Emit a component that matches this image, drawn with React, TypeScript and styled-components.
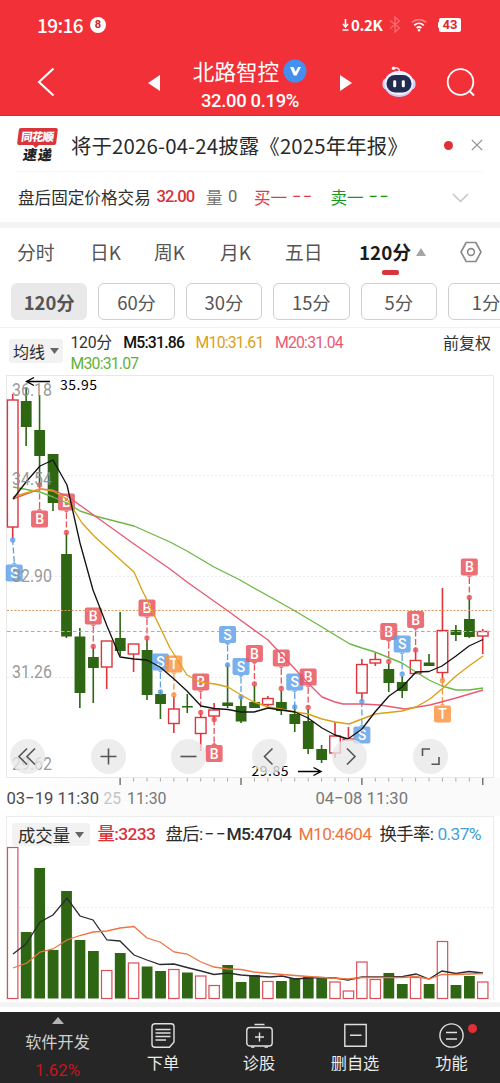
import React from "react";
import styled, { createGlobalStyle, css } from "styled-components";

const GlobalStyle = createGlobalStyle`
  * { box-sizing: border-box; }
  html, body { margin: 0; padding: 0; background: #fff; }
  body {
    font-family: "Noto Sans CJK SC", "Noto Sans", sans-serif;
    color: #222;
    line-height: 1;
    -webkit-font-smoothing: antialiased;
  }
  svg { display: block; flex: none; }
`;

const num = css`
  font-family: Roboto, "Noto Sans CJK SC", sans-serif;
`;

const Screen = styled.div`
  width: 500px;
  height: 1083px;
  overflow: hidden;
  display: flex;
  flex-direction: column;
  background: #fff;
`;

/* ---------- header ---------- */
const Header = styled.header`
  height: 116px;
  flex: none;
  background: #f13038;
  border-bottom: 1px solid #e02a32;
  color: #fff;
  display: flex;
  flex-direction: column;
`;
const StatusBar = styled.div`
  height: 50px;
  padding: 0 39px 0 37px;
  display: flex;
  align-items: center;
`;
const Clock = styled.span`
  font-size: 19px;
  font-weight: 500;
  letter-spacing: -0.6px;
  width: 53px;
  white-space: nowrap;
`;
const CountDot = styled.span`
  ${num}
  width: 16px;
  height: 16px;
  border-radius: 50%;
  background: #fff;
  color: #c8242c;
  font-size: 11px;
  font-weight: 700;
  line-height: 16px;
  text-align: center;
`;
const Speed = styled.span`
  margin: 0 7px 0 2px;
  width: 31px;
  font-size: 15px;
  font-weight: 700;
  letter-spacing: -0.4px;
  white-space: nowrap;
`;
const Battery = styled.span`
  ${num}
  position: relative;
  width: 22px;
  height: 14px;
  margin-left: 12px;
  border-radius: 2px;
  background: #fff;
  color: #d62a32;
  font-size: 13px;
  font-weight: 700;
  line-height: 14.5px;
  text-align: center;
  &::before {
    content: "";
    position: absolute;
    left: -1px;
    top: 4px;
    width: 2px;
    height: 6px;
    border-radius: 1px;
    background: #fff;
  }
`;
const StatusIcon = styled.span<{ $after: number }>`
  margin-right: ${(p) => p.$after}px;
`;
const Spacer = styled.span`
  flex: 1;
`;
const TitleBar = styled.div`
  height: 66px;
  display: grid;
  grid-template-columns: 37px 111px 12px 180px 12px 30px 34px 30px 30px;
  align-items: center;
  padding-top: 1px;
`;
const TitleCell = styled.div<{ $shift?: number }>`
  display: flex;
  margin-top: ${(p) => p.$shift ?? 0}px;
`;
const StockBlock = styled.div`
  display: flex;
  flex-direction: column;
  align-items: center;
  gap: 7px;
  margin-top: 3px;
`;
const StockName = styled.div`
  display: flex;
  align-items: center;
  gap: 4px;
  font-size: 21.6px;
  line-height: 26px;
`;
const StockQuote = styled.div`
  ${num}
  font-size: 18.4px;
  font-weight: 500;
  line-height: 20px;
  letter-spacing: -0.3px;
`;

/* ---------- notice ---------- */
const Notice = styled.div`
  height: 56px;
  margin: 0 17px;
  border-bottom: 1px solid #f7f7f7;
  flex: none;
  display: flex;
  align-items: center;
  padding-top: 3px;
`;
const ExpressLogo = styled.div`
  width: 41px;
  display: flex;
  flex-direction: column;
  align-items: center;
  font-weight: 900;
`;
const LogoTop = styled.span`
  position: relative;
  width: 39px;
  height: 17px;
  border-radius: 2px;
  background: #d9363c;
  transform: skewX(-7deg);
  color: #fff;
  font-size: 11.4px;
  line-height: 16px;
  text-align: center;
  letter-spacing: -0.6px;
  &::after {
    content: "";
    position: absolute;
    left: 16px;
    top: 17px;
    border: 3px solid transparent;
    border-top-color: #d9363c;
  }
`;
const LogoBottom = styled.span`
  color: #222;
  font-size: 14px;
  line-height: 15px;
  letter-spacing: 1px;
  margin-top: 2px;
  transform: skewX(-9deg);
`;
const NoticeText = styled.span`
  margin-left: 13px;
  font-size: 20.4px;
  line-height: 26px;
  letter-spacing: 0.15px;
  color: #2a2a2a;
  white-space: nowrap;
`;
const RedDot = styled.span<{ $size: number }>`
  width: ${(p) => p.$size}px;
  height: ${(p) => p.$size}px;
  border-radius: 50%;
  background: #e03036;
  flex: none;
`;
const CloseIcon = styled.span`
  margin-left: 18px;
`;
const AfterHours = styled.div`
  height: 50px;
  flex: none;
  display: grid;
  grid-template-columns: 138.5px 49.5px 22px 26px 38px 38.5px 38px 83px auto;
  padding: 1px 0 0 18px;
  align-items: center;
  font-size: 16.6px;
  white-space: nowrap;
  color: #2f2f2f;
`;
const Cell = styled.span<{ $color?: string }>`
  color: ${(p) => p.$color ?? "inherit"};
`;
const NumCell = styled.span<{ $color?: string; $spacing?: number; $weight?: number }>`
  ${num}
  color: ${(p) => p.$color ?? "inherit"};
  font-weight: ${(p) => p.$weight ?? 400};
  letter-spacing: ${(p) => p.$spacing ?? -0.6}px;
`;
const Band = styled.div<{ $h: number; $above?: number }>`
  height: ${(p) => p.$h}px;
  margin-top: ${(p) => p.$above ?? 0}px;
  flex: none;
  background: #f4f4f4;
`;

/* ---------- period selection ---------- */
const Tabs = styled.nav`
  height: 48px;
  flex: none;
  display: grid;
  grid-template-columns: 73px 64px 66px 65px 74px 101px auto;
  padding-left: 17px;
  align-items: center;
`;
const Tab = styled.div<{ $active?: boolean }>`
  position: relative;
  display: flex;
  align-items: center;
  gap: 5px;
  font-size: 18.8px;
  line-height: 26px;
  white-space: nowrap;
  color: ${(p) => (p.$active ? "#1c1c1c" : "#555")};
  font-weight: ${(p) => (p.$active ? 700 : 400)};
`;
const Underline = styled.span`
  position: absolute;
  left: 23px;
  top: 31px;
  width: 17px;
  height: 4.5px;
  border-radius: 2px;
  background: #d8353d;
`;
const Chips = styled.div`
  height: 52px;
  flex: none;
  border-bottom: 1px solid #f0f0f0;
  display: flex;
  gap: 11px;
  padding: 7px 0 0 11px;
  overflow: hidden;
`;
const Chip = styled.div<{ $active?: boolean }>`
  width: 76.4px;
  height: 37px;
  flex: none;
  border-radius: 6px;
  border: 1px solid ${(p) => (p.$active ? "#e9e9e9" : "#cfcfcf")};
  background: ${(p) => (p.$active ? "#e9e9e9" : "#fff")};
  color: #555;
  font-size: 18.4px;
  font-weight: ${(p) => (p.$active ? 700 : 400)};
  line-height: 36px;
  text-align: center;
`;

/* ---------- indicator line ---------- */
const Indicators = styled.div`
  height: 47px;
  flex: none;
  display: flex;
  padding: 5px 9px 0 9px;
`;
const Selector = styled.div<{ $w: number; $h: number }>`
  width: ${(p) => p.$w}px;
  height: ${(p) => p.$h}px;
  flex: none;
  border-radius: 3px;
  background: #f2f2f2;
  display: flex;
  align-items: center;
  justify-content: center;
  gap: 5px;
  color: #2c2c2c;
  white-space: nowrap;
`;
const SelectorText = styled.span<{ $size: number }>`
  font-size: ${(p) => p.$size}px;
`;
const AvgSelector = styled(Selector)`
  margin-top: 6px;
`;
const AvgValues = styled.div`
  ${num}
  margin-left: 7.5px;
  width: 300px;
  display: flex;
  flex-wrap: wrap;
  align-content: flex-start;
  column-gap: 11.5px;
  font-size: 15.8px;
  line-height: 20.5px;
  letter-spacing: -0.8px;
`;
const Adjust = styled.span`
  font-size: 16px;
  line-height: 19px;
  color: #333;
`;
const Value = styled.span<{ $color: string; $weight?: number }>`
  color: ${(p) => p.$color};
  font-weight: ${(p) => p.$weight ?? 400};
  white-space: nowrap;
`;
const PeriodValue = styled(Value)`
  letter-spacing: -0.3px;
`;

/* ---------- chart ---------- */
const ChartPanel = styled.section`
  position: relative;
  height: 441px;
  flex: none;
`;
const Controls = styled.div`
  position: absolute;
  left: 10px;
  top: 364px;
  display: flex;
  gap: 45.5px;
`;
const RoundButton = styled.button`
  width: 35px;
  height: 35px;
  padding: 0;
  border: 0;
  border-radius: 50%;
  background: rgba(232, 232, 232, 0.78);
`;
const VolumePanel = styled.section`
  height: 184px;
  flex: none;
  margin: 0 6px;
  border: 1px solid #ececec;
  border-bottom: 0;
  display: flex;
  flex-direction: column;
`;
const VolumeHead = styled.div`
  ${num}
  height: 31px;
  padding: 5px 0 0 5px;
  flex: none;
  display: flex;
  font-size: 17.4px;
  line-height: 25px;
  letter-spacing: -0.65px;
  white-space: nowrap;
`;
const VolumeValue = styled(Value)<{ $w: number }>`
  width: ${(p) => p.$w}px;
`;
const Dashes = styled.span`
  letter-spacing: 1.6px;
  margin-left: 2px;
`;
const VolumeSelector = styled(Selector)`
  font-family: "Noto Sans CJK SC", sans-serif;
  letter-spacing: 0;
  margin: 1px 7.5px 0 0;
`;

/* ---------- bottom navigation ---------- */
const BottomNav = styled.nav`
  margin-top: 5px;
  flex: 1;
  background: #262626;
  display: grid;
  grid-template-columns: 115px 96px 96px 96px 97px;
`;
const NavItem = styled.div<{ $top: number }>`
  display: flex;
  flex-direction: column;
  align-items: center;
  padding-top: ${(p) => p.$top}px;
  font-size: 16.2px;
  color: #ececec;
`;
const NavLabel = styled.span<{ $gap: number; $color?: string }>`
  margin-top: ${(p) => p.$gap}px;
  line-height: 20px;
  color: ${(p) => p.$color ?? "inherit"};
`;
const Change = styled.span`
  ${num}
  margin-top: 9px;
  font-size: 16.8px;
  line-height: 20px;
  color: #c4161c;
`;
const IconWrap = styled.span`
  position: relative;
`;
const Badge = styled(RedDot)`
  position: absolute;
  right: -12.5px;
  top: 0.5px;
`;

/* ---------- data ---------- */
const RED = "#e0333c";
const GREEN = "#2f6614";
const PITCH = 13.43;
const cx = (i: number) => 12.7 + PITCH * i;

// kind, body top, body bottom, wick top, wick bottom
type Candle = ["r" | "g", number, number, number, number];
const candles: Candle[] = [
  ["r", 400, 527, 394, 539], ["g", 401, 427, 388, 446], ["g", 430, 456, 395, 485], ["g", 454, 503, 454, 511],
  ["g", 554, 636.5, 533, 638], ["g", 636.5, 693, 628, 708], ["g", 657, 668, 647, 703], ["r", 641, 667, 641, 689],
  ["g", 638, 651, 612, 656], ["r", 644, 654, 644, 672], ["g", 650, 695, 639, 700], ["g", 694, 704, 692, 719],
  ["r", 709, 723.5, 696, 733], ["g", 706, 707.5, 694, 713], ["r", 717.5, 733.5, 713, 751], ["r", 710, 716, 703, 720],
  ["g", 702.5, 706, 665, 708], ["g", 706, 721.5, 697, 723], ["g", 702, 708, 685, 708], ["r", 698.5, 704.5, 696, 706],
  ["g", 702, 711, 690, 715], ["g", 714, 724, 705, 732], ["g", 721, 749, 709, 754], ["g", 749, 760, 745, 763],
  ["r", 736, 753, 722, 758], ["r", 739, 740, 727, 740], ["r", 664.5, 693, 659, 701], ["r", 659.5, 663, 653, 666],
  ["g", 669, 683, 663, 692], ["g", 682, 691, 676, 698], ["r", 660.5, 673.5, 650, 674], ["g", 662.5, 666, 654, 666],
  ["r", 630.5, 672.5, 588, 680], ["g", 630, 635, 625, 641], ["g", 619, 637, 598, 638], ["r", 631.5, 636, 629, 654],
];

const volumes: ["r" | "g", number][] = [
  ["r", 847], ["g", 932], ["g", 868], ["g", 950], ["g", 891], ["g", 940], ["g", 951], ["r", 970], ["g", 953],
  ["r", 962.5], ["g", 966.5], ["g", 971], ["r", 969], ["g", 972.5], ["r", 975.5], ["r", 985], ["g", 965], ["g", 982],
  ["g", 975], ["r", 981], ["g", 981], ["g", 978], ["g", 977], ["g", 977.5], ["r", 981.5], ["r", 990.5], ["r", 961.5],
  ["r", 979], ["g", 973], ["g", 984], ["r", 977], ["g", 984], ["r", 941], ["g", 985], ["g", 976], ["r", 981.5],
];

const lines: [string, string][] = [
  ["#6bb944", "13,487 40,492 53,497 67,503 80,511 95,516 134,526 170,542 187,551 214,567 240,580 254,588 281,603 295,611 322,627 335,635 350,644 362,648 375,652 402,663 416,672 429,680 442,686 456,690 469,690 483,688"],
  ["#e85a74", "13,499 26,494 40,489 53,490 67,496 95,516 134,544 170,569 187,582 228,611 268,640 281,654 308,683 322,697 335,702 343,704 362,704 380,705 405,709 430,705 456,698 483,690"],
  ["#dba017", "13,497 26,493 40,489 53,491 67,499 82,523 95,537 134,572 142,590 147,600 170,648 187,675 200,682 215,684 228,687 241,695 254,702 268,707 281,709 295,712 308,714 322,719 335,722 349,724 375,714 402,711 416,707 430,699 443,688 456,676 469,666 483,656"],
  ["#141414", "13,499 26,482 40,466 53,460 67,485 80,543 93,590 107,626 120,657 134,659 147,660 160,667 174,679 187,691 201,706 214,708.5 228,709.5 241,712 254,712 268,708 281,710 295,712 308,718 322,728 335,735 348,739 362,729 375,712 389,696 402,687 416,672 429,671.5 442,666 456,656 469,646 483,639.5"],
];

// column, letter, box centre y, dot y
type Mark = [number, "B" | "S" | "T", number, number];
const marks: Mark[] = [
  [0, "S", 573, 540], [2, "B", 519, 485], [4, "B", 502, 532.5], [6, "B", 616, 646.5], [10, "B", 608, 638],
  [11, "S", 662, 692], [12, "T", 664, 695], [14, "B", 682, 712.5], [15, "B", 753.5, 719.5], [16, "S", 634.5, 665],
  [17, "S", 666.5, 697], [18, "B", 653.5, 684], [20, "B", 658, 688.5], [21, "S", 682, 707], [22, "B", 677, 707.5],
  [26, "S", 735, 701.5], [28, "B", 631.5, 661.5], [29, "S", 644, 674], [30, "B", 619.5, 650], [32, "T", 714, 680.5],
  [34, "B", 567, 597.5],
];
const markColor = { B: "#e8505a", S: "#5d9fe8", T: "#fb923c" };

const yLabels: [string, number][] = [["36.18", 396], ["34.54", 485], ["32.90", 582], ["31.26", 678], ["29.62", 770]];

function Marker({ mark }: { mark: Mark }) {
  const [i, letter, y, dot] = mark;
  const color = markColor[letter];
  const x = cx(i) + (i === 0 ? 1.5 : 0);
  const below = dot > y;
  const edge = below ? y + 8.5 : y - 8.5;
  const tip = below ? edge + 2.5 : edge - 2.5;
  return (
    <g>
      <line x1={x} x2={cx(i)} y1={tip} y2={dot} stroke={color} strokeWidth="1.3" strokeDasharray="6 2.5" />
      <circle cx={cx(i)} cy={dot} r="2.7" fill={color} opacity=".8" />
      <g opacity=".82">
        <rect x={x - 8.5} y={y - 8.5} width="17" height="17" rx="2" fill={color} />
        <path d={`M${x - 3} ${edge}H${x + 3}L${x} ${tip}Z`} fill={color} />
      </g>
      <text x={x} y={y + 5.1} textAnchor="middle" fontFamily="Roboto, sans-serif" fontSize="14" fontWeight="500" fill="#fff">
        {letter}
      </text>
    </g>
  );
}

function PriceChart() {
  return (
    <svg width="500" height="441" viewBox="0 375 500 441" fontFamily="Roboto, sans-serif">
      <defs>
        <linearGradient id="axisFade" x1="0" x2="1">
          <stop offset="0" stopColor="#fff" />
          <stop offset=".3" stopColor="#fafafa" />
        </linearGradient>
      </defs>
      <rect x="0" y="778" width="500" height="38" fill="url(#axisFade)" />
      <rect x="6.5" y="375.5" width="487" height="402" fill="#fff" stroke="#e8e8e8" />
      {[475.5, 576.5, 677.5].map((y) => (
        <line key={y} x1="7" x2="493" y1={y} y2={y} stroke="#e9e9e9" strokeDasharray="2 2" />
      ))}
      {candles.map(([k, t, b, wt, wb], i) => {
        const c = k === "r" ? RED : GREEN;
        const x = cx(i);
        return k === "r" ? (
          <g key={i} stroke={c} strokeWidth="1.4" fill="none">
            <path d={`M${x} ${wt}V${t}M${x} ${b}V${wb}`} strokeWidth="1.6" />
            <rect x={x - 5.3} y={t} width="10.6" height={b - t} />
          </g>
        ) : (
          <g key={i} fill={c}>
            <rect x={x - 0.8} y={wt} width="1.6" height={wb - wt} />
            <rect x={x - 5.3} y={t} width="10.8" height={b - t} />
          </g>
        );
      })}
      {marks.map((m) => (
        <Marker key={m[0]} mark={m} />
      ))}
      <line x1="7" x2="493" y1="610.5" y2="610.5" stroke="#dc9a62" strokeDasharray="2 1.6" />
      <line x1="7" x2="493" y1="631.5" y2="631.5" stroke="#c0aa80" strokeDasharray="3.5 2.5" />
      {lines.map(([c, p]) => (
        <polyline key={c} points={p} fill="none" stroke={c} strokeWidth="1.35" strokeLinejoin="round" />
      ))}
      {yLabels.map(([t, y]) => (
        <text key={t} x="12" y={y} fontSize="17.5" fill="#8c8c8c" fillOpacity=".9" textLength="40" lengthAdjust="spacingAndGlyphs">
          {t}
        </text>
      ))}
      <path d="M50 381.5H27M34 377.5L26.5 381.5L34 385.5" fill="none" stroke="#000" strokeWidth="1.4" />
      <text x="60" y="390" fontFamily="Noto Sans CJK SC, sans-serif" fontSize="14" fill="#000" textLength="37">35.95</text>
      <text x="251.5" y="776" fontFamily="Noto Sans CJK SC, sans-serif" fontSize="14" fill="#000" textLength="37">29.85</text>
      <path d="M298 771.5H320M313.5 767.5L321 771.5L313.5 775.5" fill="none" stroke="#000" strokeWidth="1.4" />
      {Array.from({ length: 28 }, (_, n) => n + 8).map((i) => {
        const major = (i - 8) % 9 === 0;
        return (
          <line key={i} x1={cx(i)} x2={cx(i)} y1="778" y2={major ? 785 : 781.5} stroke={major ? "#777" : "#aaa"} strokeWidth={major ? 1.5 : 1} />
        );
      })}
      <g fontSize="17">
        <text x="6.5" y="804" fill="#4a4a4a" textLength="92.5" lengthAdjust="spacingAndGlyphs">03−19 11:30</text>
        <text x="103.5" y="804" fill="#c4c4c4" textLength="17.5" lengthAdjust="spacingAndGlyphs">25</text>
        <text x="127" y="804" fill="#777" textLength="39.5" lengthAdjust="spacingAndGlyphs">11:30</text>
        <text x="315.5" y="804" fill="#777" textLength="92.5" lengthAdjust="spacingAndGlyphs">04−08 11:30</text>
      </g>
    </svg>
  );
}

const volumeMa5 =
  "13,954 26,944 40,922 53,915 67,898 80,916 93,920 107,940 120,941 134,955 147,960 160,964.5 174,964 187,967.5 201,971 214,974.5 228,973 241,975 254,976 270,977 282,976 295,979 317,977.5 335,978 348,980 362,977 388,977 403,976.5 416,974 429,979 442,971 456,973.5 469,971.5 483,973";
const volumeMa10 =
  "13,968 27,963 40,952 53,949 67,940 80,935.5 93,932 107,931 120,928 134,926.5 147,938 160,942 174,952 187,954 201,962 214,967 228,969 241,969.5 254,972 270,973.5 295,975.5 322,977.5 348,979 362,977.5 403,977.5 416,976.5 429,979 442,974.5 456,974.5 483,973.5";

function VolumeChart() {
  return (
    <svg width="486" height="152" viewBox="7 848 486 152" overflow="visible">
      <line x1="7" x2="493" y1="907.5" y2="907.5" stroke="#e9e9e9" strokeDasharray="2 2" />
      {volumes.map(([k, t], i) =>
        k === "r" ? (
          <rect key={i} x={cx(i) - 5.2} y={t + 0.5} width="10.4" height={998 - t} fill="#fff" stroke="#dc4e58" strokeWidth="1.2" />
        ) : (
          <rect key={i} x={cx(i) - 5.3} y={t} width="10.8" height={998.5 - t} fill={GREEN} />
        )
      )}
      <polyline points={volumeMa5} fill="none" stroke="#2a2a30" strokeWidth="1.3" />
      <polyline points={volumeMa10} fill="none" stroke="#ee7440" strokeWidth="1.3" />
    </svg>
  );
}

const Triangle = ({ w, h, dir, color }: { w: number; h: number; dir: "up" | "down" | "left" | "right"; color: string }) => {
  const d = {
    up: `M0 ${h}H${w}L${w / 2} 0Z`,
    down: `M0 0H${w}L${w / 2} ${h}Z`,
    left: `M${w} 0V${h}L0 ${h / 2}Z`,
    right: `M0 0V${h}L${w} ${h / 2}Z`,
  }[dir];
  return (
    <svg width={w} height={h}>
      <path d={d} fill={color} />
    </svg>
  );
};

const Robot = () => (
  <svg width="34" height="32" viewBox="0 0 34 32" overflow="visible">
    <path d="M12 2.5C15 1 17.5 2 17.5 6" fill="none" stroke="#f6cdd8" strokeWidth="1.7" />
    <circle cx="11.5" cy="2.3" r="1.7" fill="#fff" />
    <rect x="0.5" y="12" width="33" height="12" rx="5" fill="#cdd2f7" />
    <ellipse cx="17" cy="18" rx="14.8" ry="13" fill="#d0c8f6" />
    <ellipse cx="17" cy="17" rx="14.4" ry="12" fill="#eef1ff" />
    <rect x="4.5" y="9" width="25" height="17.5" rx="8.5" fill="#222c50" />
    <rect x="11.2" y="14.2" width="3" height="7" rx="1.3" fill="#fff" />
    <rect x="19.8" y="14.2" width="3" height="7" rx="1.3" fill="#fff" />
  </svg>
);

const line = { fill: "none", stroke: "#555", strokeWidth: 1.6 };

export default function App() {
  return (
    <Screen>
      <GlobalStyle />
      <Header>
        <StatusBar>
          <Clock>19:16</Clock>
          <CountDot>8</CountDot>
          <Spacer />
          <svg width="7" height="14" viewBox="0 0 7 14">
            <path d="M3.5 1V9M1 6L3.5 9L6 6M.5 12H6.5" fill="none" stroke="#fff" strokeWidth="1.6" />
          </svg>
          <Speed>0.2K</Speed>
          <StatusIcon $after={10}>
            <svg width="12" height="17" viewBox="0 0 12 17">
              <path d="M1 4.5L10.5 12L6 16V1L10.5 5L1 12.5" fill="none" stroke="#f76a70" strokeWidth="1.3" />
            </svg>
          </StatusIcon>
          <svg width="16" height="14" viewBox="0 0 16 14" fill="none" stroke="#fff" strokeWidth="1.8">
            <path d="M.8 4.4C5 .6 11 .6 15.2 4.4" stroke="#f97b80" />
            <path d="M3.2 7.3C6 4.8 10 4.8 12.8 7.3" />
            <path d="M5.6 10C7 8.8 9 8.8 10.4 10" />
            <circle cx="8" cy="12.2" r="1.2" fill="#fff" stroke="none" />
          </svg>
          <Battery>43</Battery>
        </StatusBar>
        <TitleBar>
          <span />
          <TitleCell $shift={-1}>
            <svg width="18" height="30" viewBox="0 0 18 30">
              <path d="M16.5 1.5L2 15L16.5 28.5" fill="none" stroke="#fff" strokeWidth="2.1" />
            </svg>
          </TitleCell>
          <Triangle w={12} h={16} dir="left" color="#fff" />
          <StockBlock>
            <StockName>
              北路智控
              <svg width="24" height="24" viewBox="0 0 24 24">
                <circle cx="12" cy="12" r="11.5" fill="#458fee" />
                <path d="M7 8H10.5L12.7 12.8L15 8H18L13.6 16.5H10.8Z" fill="#fff" />
              </svg>
            </StockName>
            <StockQuote>32.00 0.19%</StockQuote>
          </StockBlock>
          <Triangle w={12} h={16} dir="right" color="#fff" />
          <span />
          <TitleCell $shift={-1}>
            <Robot />
          </TitleCell>
          <span />
          <TitleCell>
            <svg width="29" height="29" viewBox="0 0 29 29" overflow="visible">
              <circle cx="14.5" cy="14" r="12.8" fill="none" stroke="#fff" strokeWidth="1.8" />
              <path d="M23 22.5L28 27.5" stroke="#fff" strokeWidth="2" />
            </svg>
          </TitleCell>
        </TitleBar>
      </Header>

      <Notice>
        <ExpressLogo>
          <LogoTop>同花顺</LogoTop>
          <LogoBottom>速递</LogoBottom>
        </ExpressLogo>
        <NoticeText>将于2026-04-24披露《2025年年报》</NoticeText>
        <Spacer />
        <RedDot $size={9} />
        <CloseIcon>
          <svg width="12" height="12" viewBox="0 0 12 12">
            <path d="M.8 .8L11.2 11.2M11.2 .8L.8 11.2" stroke="#8c8c8c" strokeWidth="1.2" />
          </svg>
        </CloseIcon>
      </Notice>
      <AfterHours>
        <Cell>盘后固定价格交易</Cell>
        <NumCell $color="#d8323a" $weight={500} $spacing={-0.9}>32.00</NumCell>
        <Cell $color="#777">量</Cell>
        <NumCell $color="#666">0</NumCell>
        <Cell $color="#d8404a">买一</Cell>
        <NumCell $color="#d8404a" $spacing={1.2}>−−</NumCell>
        <Cell $color="#169a16">卖一</Cell>
        <NumCell $color="#169a16" $spacing={1.2}>−−</NumCell>
        <svg width="17" height="10" viewBox="0 0 17 10">
          <path d="M1 1L8.5 8.5L16 1" fill="none" stroke="#c4c4c4" strokeWidth="1.5" />
        </svg>
      </AfterHours>
      <Band $h={6} />

      <Tabs>
        <Tab>分时</Tab>
        <Tab>日K</Tab>
        <Tab>周K</Tab>
        <Tab>月K</Tab>
        <Tab>五日</Tab>
        <Tab $active>
          120分
          <Triangle w={10} h={8} dir="up" color="#a5a5a5" />
          <Underline />
        </Tab>
        <svg width="22" height="22" viewBox="0 0 22 22" fill="none" stroke="#8a8a8a" strokeWidth="1.6">
          <path d="M6.2 1.5H15.8L21 11L15.8 20.5H6.2L1 11Z" strokeLinejoin="round" />
          <circle cx="11" cy="11" r="3.4" />
        </svg>
      </Tabs>
      <Chips>
        <Chip $active>120分</Chip>
        <Chip>60分</Chip>
        <Chip>30分</Chip>
        <Chip>15分</Chip>
        <Chip>5分</Chip>
        <Chip>1分</Chip>
      </Chips>

      <Indicators>
        <AvgSelector $w={54} $h={24}>
          <SelectorText $size={16}>均线</SelectorText>
          <Triangle w={9} h={6} dir="down" color="#666" />
        </AvgSelector>
        <AvgValues>
          <PeriodValue $color="#333">120分</PeriodValue>
          <Value $color="#111" $weight={500}>M5:31.86</Value>
          <Value $color="#dba017">M10:31.61</Value>
          <Value $color="#e85a74">M20:31.04</Value>
          <Value $color="#5fb336">M30:31.07</Value>
        </AvgValues>
        <Spacer />
        <Adjust>前复权</Adjust>
      </Indicators>

      <ChartPanel>
        <PriceChart />
        <Controls>
          <RoundButton>
            <svg width="35" height="35" {...line}>
              <path d="M17 9.5L9 17.5L17 25.5M25 9.5L17 17.5L25 25.5" />
            </svg>
          </RoundButton>
          <RoundButton>
            <svg width="35" height="35" {...line}>
              <path d="M9.5 17.5H25.5M17.5 9.5V25.5" />
            </svg>
          </RoundButton>
          <RoundButton>
            <svg width="35" height="35" {...line}>
              <path d="M9.5 17.5H25.5" />
            </svg>
          </RoundButton>
          <RoundButton>
            <svg width="35" height="35" {...line}>
              <path d="M20.5 9.5L12.5 17.5L20.5 25.5" />
            </svg>
          </RoundButton>
          <RoundButton>
            <svg width="35" height="35" {...line}>
              <path d="M15 9.5L23 17.5L15 25.5" />
            </svg>
          </RoundButton>
          <RoundButton>
            <svg width="35" height="35" {...line}>
              <path d="M9.5 17V10H17M18.5 25.2H26V18" />
            </svg>
          </RoundButton>
        </Controls>
      </ChartPanel>

      <VolumePanel>
        <VolumeHead>
          <VolumeSelector $w={78} $h={23}>
            <SelectorText $size={17.4}>成交量</SelectorText>
            <Triangle w={9} h={6} dir="down" color="#666" />
          </VolumeSelector>
          <VolumeValue $w={68} $color="#d8323a" $weight={500}>量:3233</VolumeValue>
          <VolumeValue $w={61} $color="#2c2c2c">
            盘后:<Dashes>−−</Dashes>
          </VolumeValue>
          <VolumeValue $w={72} $color="#2c2c2c" $weight={500}>M5:4704</VolumeValue>
          <VolumeValue $w={81} $color="#ee7440">M10:4604</VolumeValue>
          <VolumeValue $w={58} $color="#2c2c2c">换手率:</VolumeValue>
          <VolumeValue $w={46} $color="#42a0d8">0.37%</VolumeValue>
        </VolumeHead>
        <VolumeChart />
      </VolumePanel>
      <Band $h={5} $above={2} />

      <BottomNav>
        <NavItem $top={5}>
          <Triangle w={12} h={7} dir="up" color="#b4b4b4" />
          <NavLabel $gap={7} $color="#cfcfcf">软件开发</NavLabel>
          <Change>1.62%</Change>
        </NavItem>
        <NavItem $top={11}>
          <svg width="24" height="25" viewBox="0 0 24 25" fill="none" stroke="#e0e0e0" strokeWidth="1.4">
            <path d="M4 .8H20Q23 .8 23 3.5V19L18.5 24.2H4Q1 24.2 1 21.5V3.5Q1 .8 4 .8ZM4.5 6.5H19.5M4.5 10H19.5M4.5 13.5H19.5M4.5 17H15" />
          </svg>
          <NavLabel $gap={4}>下单</NavLabel>
        </NavItem>
        <NavItem $top={11}>
          <svg width="27" height="25" viewBox="0 0 27 25" fill="none" stroke="#e0e0e0" strokeWidth="1.4">
            <rect x=".8" y="4.5" width="25.4" height="18.5" rx="3" />
            <path d="M8.5 1.5H18.5M9 14H18M13.5 9.5V18.5M5 24H8.5M18.5 24H22" />
          </svg>
          <NavLabel $gap={4}>诊股</NavLabel>
        </NavItem>
        <NavItem $top={11}>
          <svg width="23" height="25" viewBox="0 0 23 25" fill="none" stroke="#e0e0e0" strokeWidth="1.4">
            <path d="M.8 1.5H22.2V23.2H.8ZM6 12.3H17.5" />
          </svg>
          <NavLabel $gap={4}>删自选</NavLabel>
        </NavItem>
        <NavItem $top={11}>
          <IconWrap>
            <svg width="25" height="25" viewBox="0 0 25 25" fill="none" stroke="#e0e0e0" strokeWidth="1.4">
              <circle cx="12.5" cy="12.5" r="11.6" />
              <path d="M7 9.5H18M7 16H18" />
            </svg>
            <Badge $size={9} />
          </IconWrap>
          <NavLabel $gap={4}>功能</NavLabel>
        </NavItem>
      </BottomNav>
    </Screen>
  );
}
